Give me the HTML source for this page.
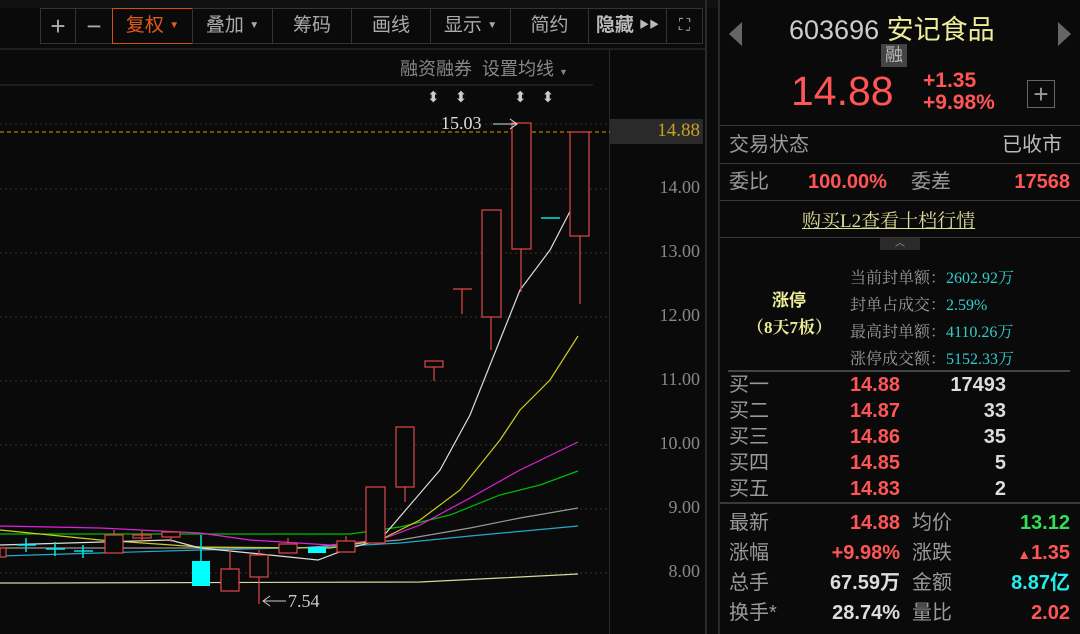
<!DOCTYPE html>
<html><head><meta charset="utf-8"><style>
html,body{margin:0;width:1080px;height:634px;overflow:hidden;}
body{background:#0a0a0a;position:relative;font-family:"Liberation Sans","Noto Sans CJK SC",sans-serif;}
.a{position:absolute;white-space:nowrap;}
.btn{position:absolute;top:8px;height:36px;border:1px solid #333;box-sizing:border-box;color:#aaa;font-size:19px;line-height:34px;text-align:center;background:#0a0a0a;}
.tri{font-size:10px;vertical-align:middle;}
.ax{position:absolute;left:612px;width:88px;text-align:right;color:#888;font-size:18px;font-family:"Liberation Serif","Noto Serif CJK SC",serif;}
.g{color:#999;font-size:20px;line-height:24px;}
.r{color:#ff5555;font-weight:bold;font-size:20px;line-height:24px;}
.w{color:#ddd;font-weight:bold;font-size:20px;}
.hl{position:absolute;left:720px;width:360px;height:1px;background:#3a3a3a;}
.lab{color:#999;font-size:16px;font-family:"Liberation Serif","Noto Serif CJK SC",serif;}
.cy{color:#33cccc;font-size:16px;font-family:"Liberation Serif","Noto Serif CJK SC",serif;}
.col div{height:30px;line-height:30px}
.bk div{height:26px;line-height:26px}
</style></head><body>
<div class="a" style="left:0;top:0;width:720px;height:8px;background:#111"></div>
<div class="btn" style="left:40px;width:36px;font-size:26px">+</div>
<div class="btn" style="left:75px;width:38px;font-size:26px">−</div>
<div class="btn" style="left:112px;width:81px;border-color:#d05010;color:#e05a1a">复权 <span class="tri">▼</span></div>
<div class="btn" style="left:192px;width:81px">叠加 <span class="tri">▼</span></div>
<div class="btn" style="left:272px;width:80px">筹码</div>
<div class="btn" style="left:351px;width:80px">画线</div>
<div class="btn" style="left:430px;width:81px">显示 <span class="tri">▼</span></div>
<div class="btn" style="left:510px;width:79px">简约</div>
<div class="btn" style="left:588px;width:79px;font-weight:bold;color:#bbb">隐藏 <span class="tri">▶▶</span></div>
<div class="btn" style="left:666px;width:37px;font-size:16px">⛶</div>
<div class="a" style="left:0;top:48px;width:705px;height:2px;background:#1e1e1e"></div>
<div class="a" style="left:400px;top:55px;color:#888;font-size:18px">融资融券 &nbsp;设置均线 <span style="font-size:9px">▼</span></div>
<div class="a" style="left:0;top:84px;width:593px;height:2px;background:#1e1e1e"></div>
<div class="a" style="left:609px;top:50px;width:1px;height:584px;background:#2a2a2a"></div>
<div class="a" style="left:705px;top:0;width:2px;height:634px;background:#2a2a2a"></div>
<div class="a" style="left:718px;top:0;width:2px;height:634px;background:#2a2a2a"></div>
<div class="a" style="left:427px;top:88px;color:#ccc;font-size:15px;letter-spacing:15px">⬍⬍</div>
<div class="a" style="left:514px;top:88px;color:#ccc;font-size:15px;letter-spacing:15px">⬍⬍</div>
<div class="a" style="left:610px;top:119px;width:93px;height:25px;background:#2a2a2a"></div>
<div class="ax" style="top:120px;color:#c8a020;font-size:19px">14.88</div>
<div class="ax" style="top:177px">14.00</div>
<div class="ax" style="top:241px">13.00</div>
<div class="ax" style="top:305px">12.00</div>
<div class="ax" style="top:369px">11.00</div>
<div class="ax" style="top:433px">10.00</div>
<div class="ax" style="top:497px">9.00</div>
<div class="ax" style="top:561px">8.00</div>
<svg class="a" style="left:0;top:0" width="610" height="634">
<g stroke="#333" stroke-dasharray="2,3"><line x1="0" y1="189" x2="610" y2="189"/><line x1="0" y1="253" x2="610" y2="253"/><line x1="0" y1="317" x2="610" y2="317"/><line x1="0" y1="381" x2="610" y2="381"/><line x1="0" y1="445" x2="610" y2="445"/><line x1="0" y1="509" x2="610" y2="509"/><line x1="0" y1="573" x2="610" y2="573"/><line x1="0" y1="124" x2="610" y2="124"/></g>
<line x1="0" y1="132" x2="610" y2="132" stroke="#d0a000" stroke-dasharray="4,3"/>
<g fill="none" stroke-width="1.2">
<polyline stroke="#d8d8a0" points="0,583 40,583 420,582 500,578 578,574"/>
<polyline stroke="#22aacc" points="0,556 200,550 330,547 400,543 470,536 578,526"/>
<polyline stroke="#999" points="0,548 300,548 400,540 470,528 520,518 578,508"/>
<polyline stroke="#00bb00" points="0,534 200,534 350,534 400,527 450,515 500,495 540,485 578,471"/>
<polyline stroke="#dd22dd" points="0,526 100,528 200,533 250,540 330,545 380,540 420,525 470,498 520,470 578,442"/>
<polyline stroke="#cccc22" points="0,530 100,540 200,547 330,548 380,540 420,520 460,490 500,440 520,410 550,380 578,336"/>
<polyline stroke="#ddd" points="0,545 170,540 200,548 250,553 318,560 350,548 380,540 410,505 440,470 470,415 500,340 520,290 550,250 578,196"/>
</g>
<g stroke="#e04848" fill="#0a0a0a" stroke-width="1.2">
<rect x="0" y="548" width="6" height="9"/>
<rect x="105" y="535" width="18" height="18"/><line x1="114" y1="530" x2="114" y2="535"/>
<rect x="133" y="535" width="18" height="3"/><line x1="142" y1="530" x2="142" y2="542"/>
<rect x="162" y="532" width="18" height="5"/><line x1="171" y1="537" x2="171" y2="542"/>
<line x1="230" y1="548" x2="230" y2="569"/><rect x="221" y="569" width="18" height="22"/>
<line x1="259" y1="550" x2="259" y2="604"/><rect x="250" y="555" width="18" height="22"/>
<line x1="288" y1="538" x2="288" y2="544"/><rect x="279" y="544" width="18" height="9"/>
<rect x="337" y="541" width="18" height="11"/><line x1="346" y1="536" x2="346" y2="541"/>
<rect x="366" y="487" width="19" height="56"/>
<rect x="396" y="427" width="18" height="60"/><line x1="405" y1="487" x2="405" y2="502"/>
<rect x="425" y="361" width="18" height="6"/><line x1="434" y1="367" x2="434" y2="381"/>
<line x1="453" y1="289" x2="472" y2="289"/><line x1="462" y1="289" x2="462" y2="314"/>
<rect x="482" y="210" width="19" height="107"/><line x1="491" y1="317" x2="491" y2="350"/>
<rect x="512" y="123" width="19" height="126"/><line x1="521" y1="249" x2="521" y2="292"/>
<rect x="570" y="132" width="19" height="104"/><line x1="580" y1="236" x2="580" y2="304"/>
</g>
<g stroke="#00e5e5" stroke-width="1.5">
<line x1="17" y1="545" x2="36" y2="545"/><line x1="26" y1="538" x2="26" y2="552"/>
<line x1="46" y1="549" x2="65" y2="549"/><line x1="55" y1="542" x2="55" y2="556"/>
<line x1="74" y1="551" x2="93" y2="551"/><line x1="83" y1="545" x2="83" y2="558"/>
<line x1="201" y1="535" x2="201" y2="561"/>
<line x1="541" y1="218" x2="560" y2="218"/>
</g>
<rect x="192" y="561" width="18" height="25" fill="#00ffff"/>
<rect x="308" y="547" width="18" height="6" fill="#00ffff"/>
<text x="441" y="129" fill="#ddd" font-size="18" font-family="Liberation Serif">15.03</text>
<path d="M493 124 H517 M510 119 L517 124 L510 129" stroke="#ddd" fill="none"/>
<path d="M264 601 H286 M270 596 L263 601 L270 606" stroke="#ccc" fill="none"/>
<text x="288" y="607" fill="#ccc" font-size="18" font-family="Liberation Serif">7.54</text>
</svg>
<!-- right panel -->
<div class="a" style="left:729px;top:22px;width:0;height:0;border-top:12px solid transparent;border-bottom:12px solid transparent;border-right:13px solid #666"></div>
<div class="a" style="left:1058px;top:22px;width:0;height:0;border-top:12px solid transparent;border-bottom:12px solid transparent;border-left:13px solid #666"></div>
<div class="a" style="left:789px;top:8px;font-size:27px;color:#ccc">603696 <span style="color:#eeee99">安记食品</span></div>
<div class="a" style="left:881px;top:44px;width:26px;height:23px;background:#444;color:#bbb;font-size:18px;text-align:center;line-height:23px">融</div>
<div class="a" style="left:791px;top:68px;font-size:41px;color:#ff5555">14.88</div>
<div class="a" style="left:923px;top:70px;font-size:21px;color:#ff5555;font-weight:bold;line-height:22px">+1.35<br>+9.98%</div>
<div class="a" style="left:1027px;top:80px;width:28px;height:28px;border:1px solid #666;box-sizing:border-box;color:#999;font-size:26px;text-align:center;line-height:26px">+</div>
<div class="hl" style="top:125px"></div>
<div class="a g" style="left:729px;top:133px">交易状态</div>
<div class="a g" style="left:1002px;top:133px;color:#bbb">已收市</div>
<div class="hl" style="top:163px"></div>
<div class="a g" style="left:729px;top:170px;height:24px">委比</div>
<div class="a r" style="left:808px;top:170px;height:24px">100.00%</div>
<div class="a g" style="left:911px;top:170px;height:24px">委差</div>
<div class="a r" style="left:1000px;top:170px;width:70px;text-align:right;height:24px">17568</div>
<div class="hl" style="top:200px"></div>
<div class="a" style="left:802px;top:206px;color:#dddd99;font-size:19px;text-decoration:underline;font-family:'Liberation Serif','Noto Serif CJK SC',serif">购买L2查看十档行情</div>
<div class="hl" style="top:237px"></div>
<div class="a" style="left:880px;top:238px;width:40px;height:12px;background:#2a2a2a;color:#999;font-size:10px;text-align:center;line-height:12px">︿</div>
<div class="a" style="left:772px;top:286px;color:#eeee99;font-size:17px;font-weight:bold">涨停</div>
<div class="a" style="left:747px;top:313px;color:#eeee99;font-size:17px;font-weight:bold;font-family:'Liberation Serif','Noto Serif CJK SC',serif">（8天7板）</div>
<div class="a lab" style="left:850px;top:265px">当前封单额：<span class="cy">2602.92万</span></div>
<div class="a lab" style="left:850px;top:292px">封单占成交：<span class="cy">2.59%</span></div>
<div class="a lab" style="left:850px;top:319px">最高封单额：<span class="cy">4110.26万</span></div>
<div class="a lab" style="left:850px;top:346px">涨停成交额：<span class="cy">5152.33万</span></div>
<div class="a" style="left:728px;top:370px;width:342px;height:2px;background:#444"></div>
<div class="a bk" style="left:729px;top:372px">
<div class="g">买一</div><div class="g">买二</div><div class="g">买三</div><div class="g">买四</div><div class="g">买五</div></div>
<div class="a bk" style="left:820px;top:372px;width:80px;text-align:right">
<div class="r">14.88</div><div class="r">14.87</div><div class="r">14.86</div><div class="r">14.85</div><div class="r">14.83</div></div>
<div class="a bk" style="left:920px;top:372px;width:86px;text-align:right">
<div class="w">17493</div><div class="w">33</div><div class="w">35</div><div class="w">5</div><div class="w">2</div></div>
<div class="hl" style="top:502px;height:2px"></div>
<div class="a col" style="left:729px;top:508px"><div class="g">最新</div><div class="g">涨幅</div><div class="g">总手</div><div class="g">换手*</div></div>
<div class="a col" style="left:800px;top:508px;width:100px;text-align:right"><div class="r">14.88</div><div class="r">+9.98%</div><div class="w">67.59万</div><div class="w">28.74%</div></div>
<div class="a col" style="left:912px;top:508px"><div class="g">均价</div><div class="g">涨跌</div><div class="g">金额</div><div class="g">量比</div></div>
<div class="a col" style="left:970px;top:508px;width:100px;text-align:right"><div class="r" style="color:#33dd55">13.12</div><div class="r"><span style="font-size:14px">▲</span>1.35</div><div class="r" style="color:#22eeee">8.87亿</div><div class="r">2.02</div></div>
</body></html>
